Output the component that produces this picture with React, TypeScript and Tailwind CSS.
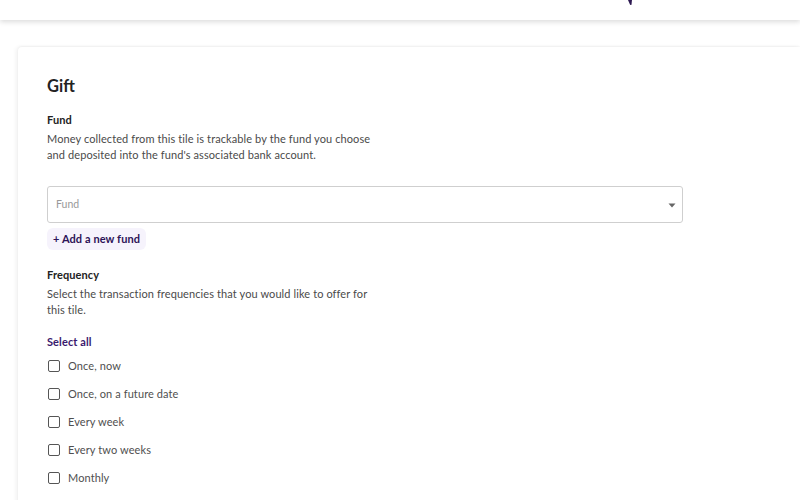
const frequencies = ["Once, now", "Once, on a future date", "Every week", "Every two weeks", "Monthly"]

function Checkbox({ label }: { label: string }) {
  return (
    <label className="flex items-center gap-[8px] h-[28px]">
      <span className="w-[12px] h-[12px] border-[1.5px] border-[#555] rounded-[2px] bg-white" />
      <span className="text-[11px] tracking-[0.1px] text-[#4f4f4f]">{label}</span>
    </label>
  )
}

export default function App() {
  return (
    <div className="w-[800px] h-[500px] overflow-hidden bg-white relative" style={{ fontFamily: "Lato, 'Noto Sans', sans-serif" }}>
      <header className="h-[20px] bg-white shadow-[0_2px_5px_rgba(0,0,0,0.14)] relative z-10">
        <svg className="absolute left-[626px] top-0" width="10" height="6" viewBox="0 0 10 6">
          <path d="M2 0 L6 0 L5.5 4.5 Q5 5.5 4 4.5 Z" fill="#2e1a52" />
        </svg>
      </header>

      <main className="pt-[27px] pl-[18px]">
        <div className="bg-white rounded-tl-[4px] shadow-[-2px_0_4px_rgba(0,0,0,0.06),0_-1px_2px_rgba(0,0,0,0.04)] pl-[29px] pr-[117px] pt-[29px] min-h-[460px]">
          <h1 className="text-[16.5px] font-bold text-[#222] leading-[20px]">Gift</h1>

          <section className="mt-[17px]">
            <h2 className="text-[11px] tracking-[0.1px] font-bold text-[#222] leading-[14px]">Fund</h2>
            <p className="mt-[4px] text-[11px] tracking-[0.1px] text-[#4a4a4a] leading-[16px] w-[330px]">
              Money collected from this tile is trackable by the fund you choose and deposited into the fund's associated bank account.
            </p>

            <div className="mt-[23px] h-[37px] border border-[#cfcfcf] rounded-[3px] flex items-center justify-between pl-[8px] pr-[6px]">
              <span className="text-[10.5px] text-[#999]">Fund</span>
              <svg width="8" height="5" viewBox="0 0 8 5" className="mt-[2px]">
                <path d="M0.5 0.5 L7.5 0.5 L4 4.5 Z" fill="#666" />
              </svg>
            </div>

            <button className="mt-[5px] h-[22px] px-[6px] rounded-[6px] bg-[#f6f3fc] text-[11px] tracking-[0.1px] font-bold text-[#2d1457]">
              + Add a new fund
            </button>
          </section>

          <section className="mt-[18px]">
            <h2 className="text-[11px] tracking-[0.1px] font-bold text-[#222] leading-[14px]">Frequency</h2>
            <p className="mt-[4px] text-[11px] tracking-[0.1px] text-[#4a4a4a] leading-[16px] w-[330px]">
              Select the transaction frequencies that you would like to offer for this tile.
            </p>
            <button className="mt-[17px] text-[11px] tracking-[0.1px] font-bold text-[#3a1a6e] leading-[14px]">Select all</button>
            <div className="pl-[1px] flex flex-col">
              {frequencies.map((f) => (
                <Checkbox key={f} label={f} />
              ))}
            </div>
          </section>
        </div>
      </main>
    </div>
  )
}
